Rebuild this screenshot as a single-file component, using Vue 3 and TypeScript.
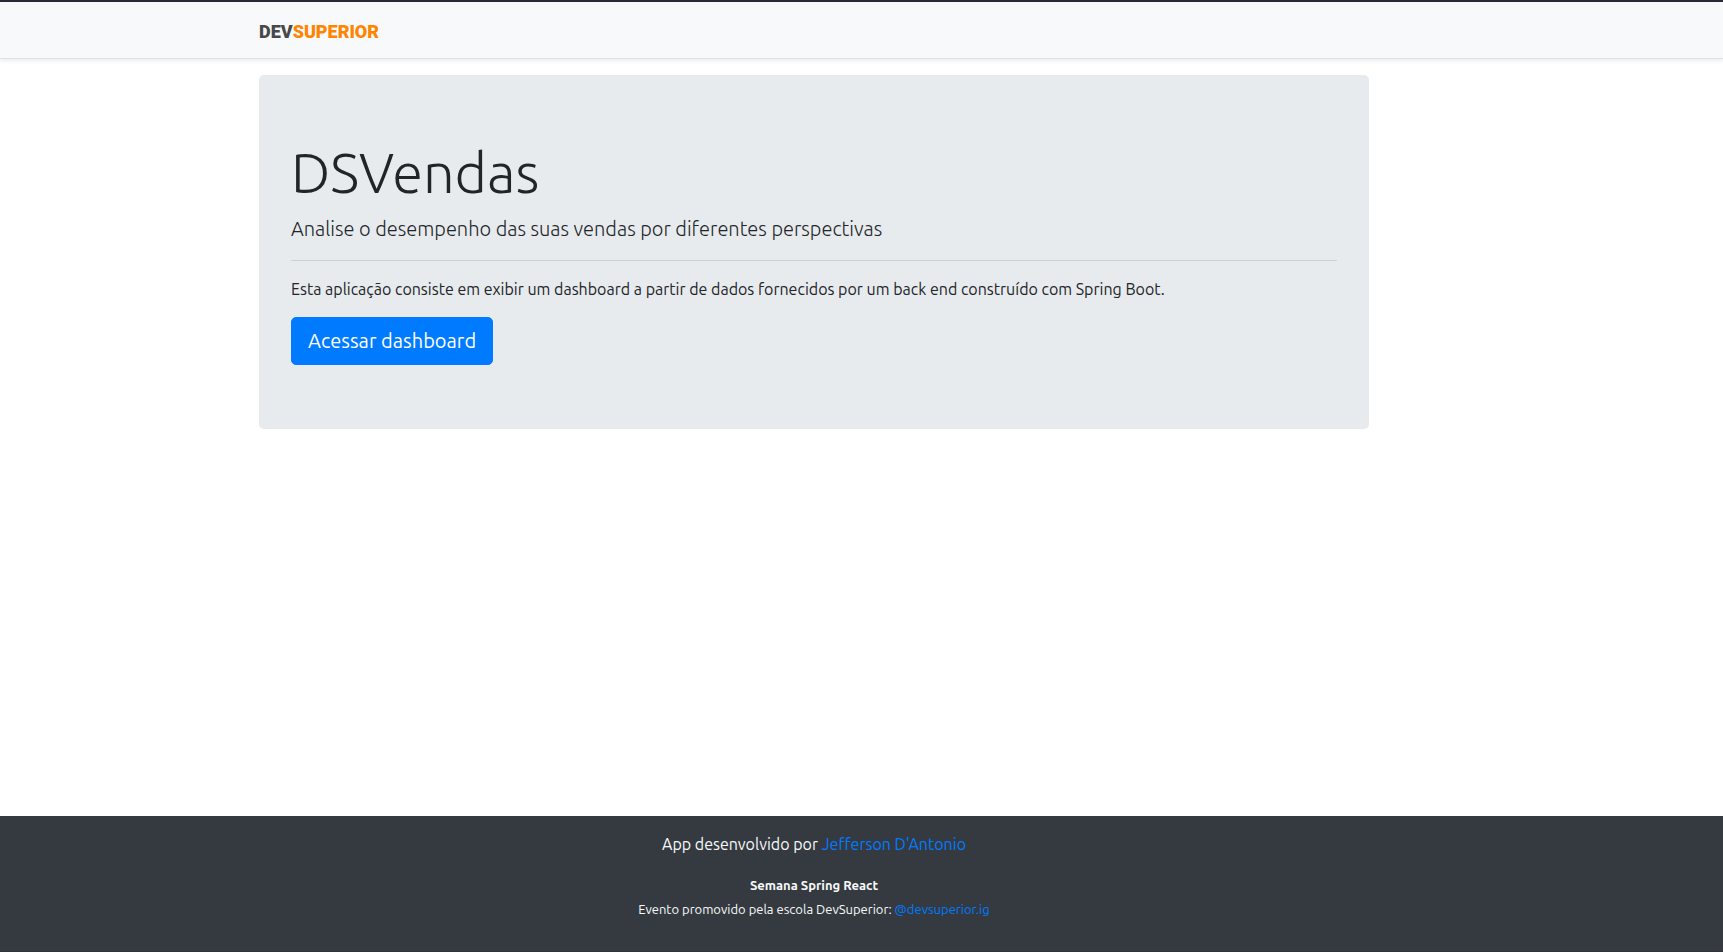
<script setup lang="ts">
interface ExternalLink {
  label: string
  href: string
}

const author: ExternalLink = {
  label: "Jefferson D'Antonio",
  href: 'https://github.com/',
}

const school: ExternalLink = {
  label: '@devsuperior.ig',
  href: 'https://instagram.com/devsuperior.ig',
}
</script>

<template>
  <div class="app">
    <header class="navbar">
      <nav class="container">
        <a class="logo" href="#/" aria-label="DevSuperior">
          <span>DEV</span><span class="logo-accent">SUPERIOR</span>
        </a>
      </nav>
    </header>

    <main class="container content">
      <section class="hero">
        <h1>DSVendas</h1>
        <p class="lead">Analise o desempenho das suas vendas por diferentes perspectivas</p>
        <hr />
        <p>
          Esta aplicação consiste em exibir um dashboard a partir de dados fornecidos por um back end
          construído com Spring Boot.
        </p>
        <a class="button" href="#/dashboard">Acessar dashboard</a>
      </section>
    </main>

    <footer class="footer">
      <div class="container">
        <p class="credit">
          App desenvolvido por <a :href="author.href">{{ author.label }}</a>
        </p>
        <p><small><strong>Semana Spring React</strong></small></p>
        <p>
          <small>
            Evento promovido pela escola DevSuperior: <a :href="school.href">{{ school.label }}</a>
          </small>
        </p>
      </div>
    </footer>
  </div>
</template>

<style>
body {
  margin: 0;
  background: #fff;
}
</style>

<style scoped>
.app,
.app * {
  box-sizing: border-box;
}

.app {
  --gutter: 95px;
  display: flex;
  flex-direction: column;
  min-height: 100vh;
  border-top: 2px solid #2c2838;
  font-family: Ubuntu, 'Noto Sans', 'Open Sans', sans-serif;
  font-size: 16px;
  line-height: 24px;
  color: #212529;
}

.container {
  width: 100%;
  max-width: 1110px;
  margin: 0 auto;
}

.navbar {
  padding: 18px var(--gutter) 14px 0;
  background: #f8f9fb;
  border-bottom: 1px solid #dee2e6;
  box-shadow: 0 2px 4px rgba(0, 0, 0, 0.075);
}

.logo {
  display: flex;
  width: max-content;
  font-family: Roboto, sans-serif;
  font-size: 18px;
  font-weight: 900;
  line-height: 24px;
  color: #484848;
  text-decoration: none;
}

.logo-accent {
  color: #ff8400;
}

.content {
  flex: 1;
  max-width: calc(1110px + var(--gutter));
  padding: 16px var(--gutter) 32px 0;
}

.hero {
  padding: 64px 32px;
  border-radius: 5px;
  background: #e8ebee;
}

.hero h1 {
  margin: 0 0 8px;
  font-size: 56px;
  font-weight: 300;
  line-height: 67px;
}

.hero p {
  margin: 0 0 16px;
}

.hero .lead {
  font-size: 20px;
  font-weight: 300;
  line-height: 30px;
}

.hero hr {
  margin: 16px 0;
  border: 0;
  border-top: 1px solid #cdd1d4;
}

.button {
  display: block;
  width: max-content;
  padding: 8px 16px;
  border: 1px solid #007bff;
  border-radius: 5px;
  background: #007bff;
  font-size: 20px;
  line-height: 30px;
  color: #fff;
  text-decoration: none;
}

.footer {
  padding: 16px var(--gutter) 31px 0;
  border-bottom: 1px solid #30323a;
  background: #343a40;
  text-align: center;
  color: #f8f9fa;
}

.footer p {
  margin: 0;
}

.footer .credit {
  margin-bottom: 16px;
}

.footer a {
  color: #007bff;
  text-decoration: none;
}

.footer small {
  font-size: 13px;
  line-height: 16px;
}
</style>
